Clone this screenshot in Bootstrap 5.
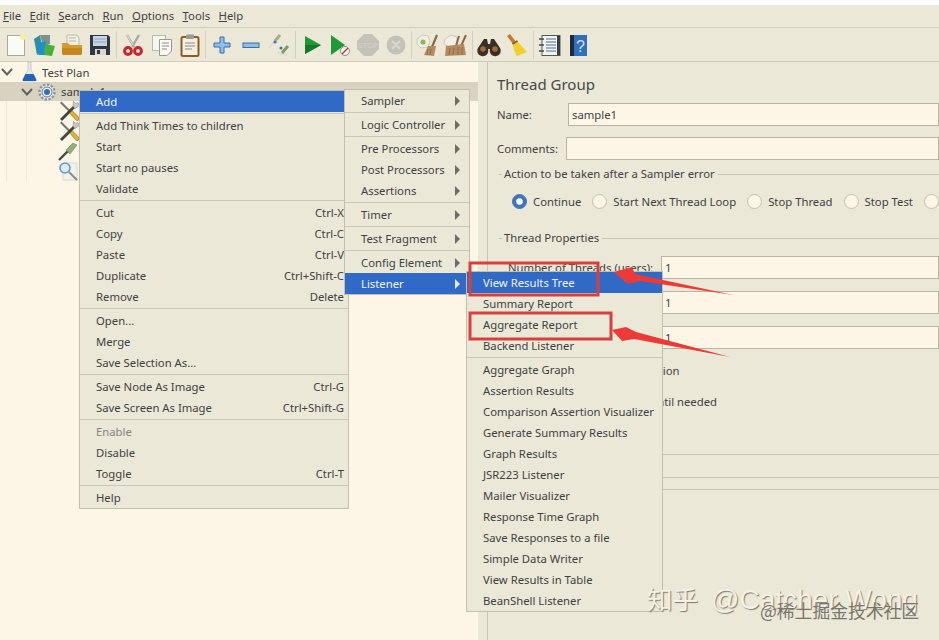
<!DOCTYPE html>
<html lang="en">
<head>
    <meta charset="UTF-8">
    <meta name="viewport" content="width=device-width, initial-scale=1.0">
    <title>Apache JMeter</title>
    <link rel="stylesheet" href="https://cdn.jsdelivr.net/npm/bootstrap@5.3.0/dist/css/bootstrap.min.css">
    <style>
        body {
            background: #fff;
            font-family: "Noto Sans", "Open Sans", sans-serif;
            font-size: 11.3px;
            line-height: 18px;
            color: #3d4242;
            height: 640px;
            overflow: hidden;
            position: relative;
        }
        .app-top { height: 5px; }
        .menu-bar {
            height: 22px;
            background: #ece8d8;
            padding-left: 3px;
            gap: 8.5px;
            align-items: center;
        }
        .tool-bar {
            height: 35px;
            background: #ece8d8;
            border-top: 1px solid #d3cfbd;
            border-bottom: 1px solid #cfcbb9;
            display: grid;
            grid-template-columns: 2px 28px 28px 28px 28px 4px 29px 29px 27px 4px 30px 27px 29px 4px 29px 27px 29px 27px 4px 27px 30px 4px 29px 28px 4px 29px 28px 4px 29px 30px;
            align-items: center;
            justify-items: center;
        }
        .tool-sep { width: 1px; height: 28px; background: #d3cfbd; }
        .split { height: 579px; }
        .tree-pane {
            width: 478px;
            background: #fdf6e6;
            flex-shrink: 0;
        }
        .tree-row { height: 20px; }
        .tree-sel { height: 19px; background: #d8d2c0; padding-left: 21px; }
        .tree-guide1 { margin-left: 6px; border-left: 1px solid #f0e9d8; }
        .tree-guide2 { margin-left: 19px; border-left: 1px solid #f0e9d8; padding-left: 31px; }
        .tree-plan { padding-left: 1px; }
        .tree-plan-label { margin-left: 4px; padding-top: 1px; }
        .strip {
            width: 10px;
            background: #ece8d8;
            border-right: 1px solid #c9c5b3;
            flex-shrink: 0;
        }
        .form-pane {
            flex-grow: 1;
            background: #ece8d8;
            padding: 11px 0 0 9px;
            overflow: hidden;
            white-space: nowrap;
        }
        .pane-title { font-size: 15px; line-height: 22px; color: #454a4a; margin-bottom: 8px; }
        .jm-input.form-control {
            height: 23px;
            min-height: 23px;
            padding: 0 3px;
            font-size: 11.3px;
            line-height: 18px;
            color: #3d4242;
            background: #fdf6e6;
            border: 1px solid #bab5a3;
            border-radius: 0;
        }
        .name-label { width: 71px; flex-shrink: 0; }
        .comment-row { margin-top: 11px; }
        .comment-label { width: 69px; flex-shrink: 0; }
        .legend-row { height: 18px; margin-top: 5px; }
        .legend-row.second { margin-top: 18px; }
        .legend-tick { width: 3px; border-top: 1px solid #c9c5b3; margin-right: 2px; margin-left: 2px; }
        .legend-line { flex-grow: 1; border-top: 1px solid #c9c5b3; margin-left: 3px; }
        .radio-row { margin: 9px 0 0 15px; height: 19px; gap: 11px; }
        .radio-item { gap: 6px; flex-shrink: 0; }
        .form-check-input.jm-radio {
            width: 15px;
            height: 15px;
            margin: 0;
            background-color: #fdf6e6;
            border-color: #c4bfad;
            flex-shrink: 0;
        }
        .form-check-input.jm-radio:checked {
            background-color: #3d76bd;
            border-color: #3d76bd;
        }
        .prop-row { margin-bottom: 12px; padding-left: 11px; }
        .prop-rows { margin: 9px 0 13px; }
        .prop-row:last-child { margin-bottom: 0; }
        .prop-label { width: 153px; flex-shrink: 0; }
        .check-row { height: 18px; padding-left: 34px; margin-bottom: 13px; }
        .rule-a { border-top: 1px solid #c9c5b3; margin-top: 43px; height: 23px; }
        .rule-b { border-top: 1px solid #c9c5b3; height: 12px; }
        .rule-c { border-top: 1px solid #c9c5b3; }
        .jm-menu {
            display: block;
            position: absolute;
            margin: 0;
            padding: 0;
            min-width: 0;
            background: #ece8d8;
            border: 1px solid #c3bfae;
            border-radius: 0;
            font-size: 11.3px;
            color: #3d4242;
        }
        .menu-main { left: 79px; top: 90px; width: 270px; }
        .menu-sub { left: 344px; top: 89px; width: 126px; }
        .menu-list { left: 466px; top: 271px; width: 197px; }
        .jm-item.dropdown-item {
            height: 21px;
            line-height: 21px;
            padding: 0 4px 0 16px;
            color: #3d4242;
            font-size: 11.3px;
            display: flex;
            justify-content: space-between;
            align-items: center;
        }
        .jm-item.jm-active { background: #316ac6; color: #f2f4f4; }
        .jm-item.jm-disabled { color: #85857b; }
        .menu-sub .jm-item.dropdown-item { padding-right: 9px; }
        .jm-sep.dropdown-divider { margin: 1px 0; border-top: 1px solid #cbc7b6; opacity: 1; height: 0; }
        .sub-caret {
            width: 0;
            height: 0;
            border-top: 5px solid transparent;
            border-bottom: 5px solid transparent;
            border-left: 5px solid #6d6d66;
        }
        .jm-active .sub-caret { border-left-color: #e6ecf6; }
        .note-layer { position: absolute; left: 0; top: 0; pointer-events: none; z-index: 1001; }
        .mark-zh {
            position: absolute;
            left: 647px;
            top: 580px;
            z-index: 1002;
            font-family: "Noto Sans CJK SC", sans-serif;
            font-size: 25.5px;
            line-height: 36px;
            color: #f5f1e6;
            text-shadow: 1px 1px 1px #7d7a6e;
            white-space: nowrap;
        }
        .mark-latin {
            font-family: "Liberation Sans", sans-serif;
            font-size: 28px;
            margin-left: 13px;
        }
        .mark-site {
            position: absolute;
            left: 760px;
            top: 598px;
            z-index: 1003;
            font-family: "Noto Sans CJK SC", sans-serif;
            font-size: 17.8px;
            line-height: 24px;
            color: #77756c;
            white-space: nowrap;
        }
    </style>
</head>
<body>

    <svg width="0" height="0" class="position-absolute">
        <symbol id="ic-tools" viewBox="0 0 22 22">
            <path d="M2 3 L3.500 1.500 L12 10 L10.500 11.500 Z" fill="#77776f"/>
            <path d="M10 11 L12.500 9 L20.500 17 Q21.500 19 20 20.500 Q18.500 21 17.500 19.500 Z" fill="#e3b32e" stroke="#7a6320" stroke-width=".6"/>
            <path d="M2 19 L4 21 L17 8 L15 6 Z" fill="#45453f"/>
            <path d="M15 6 L15.500 1.500 L18 3.500 L20 2.500 L21.500 5.500 L17 8.500 Z" fill="#c5c8c4" stroke="#7d807d" stroke-width=".5"/>
        </symbol>
    </svg>

    <div class="app-top"></div>

    <!-- Menu bar -->
    <div class="menu-bar d-flex">
        <span><u>F</u>ile</span>
        <span><u>E</u>dit</span>
        <span><u>S</u>earch</span>
        <span><u>R</u>un</span>
        <span><u>O</u>ptions</span>
        <span><u>T</u>ools</span>
        <span><u>H</u>elp</span>
    </div>

    <!-- Toolbar -->
    <div class="tool-bar">
        <span></span>
        <svg width="24" height="24" viewBox="0 0 24 24"><rect x="3.500" y="2.500" width="17" height="20" fill="#fbfbf6" stroke="#a9a89c"/><circle cx="19" cy="4" r="3" fill="#f5f0a0"/></svg>
        <svg width="24" height="24" viewBox="0 0 24 24"><path d="M2 6 L8 2 L11 20 L5 22 Z" fill="#2f8f9c"/><path d="M8 2 H18 V11 L11 13 Z" fill="#7d9488"/><path d="M6 10 L14 8 L16 22 L7 22 Z" fill="#1f8fd0"/><path d="M13 11 L23 13 L20 23 L12 22 Z" fill="#4bb03a"/></svg>
        <svg width="24" height="24" viewBox="0 0 24 24"><path d="M7 2 H17 L19 5 V14 H7 Z" fill="#f2efe4" stroke="#a9a392" stroke-width=".7"/><path d="M9 5 H16 M9 8 H16" stroke="#b9b5a6"/><path d="M2 10 H8 L10 12 H22 V20 Q22 22 20 22 H4 Q2 22 2 20 Z" fill="#d89a2b"/><path d="M2 15 H22 V20 Q22 22 20 22 H4 Q2 22 2 20 Z" fill="#c5861d"/></svg>
        <svg width="24" height="24" viewBox="0 0 24 24"><path d="M2 2 H20 L22 4 V22 H2 Z" fill="#2f3644"/><rect x="5" y="3" width="14" height="10" fill="#c9d4e3"/><path d="M6 6 H18 M6 9 H18" stroke="#8fa2bd"/><rect x="7" y="16" width="11" height="6" fill="#d8d8d0"/><rect x="9" y="17" width="3" height="4" fill="#2f3644"/></svg>
        <span class="tool-sep"></span>
        <svg width="24" height="24" viewBox="0 0 24 24"><path d="M6 2 L13 14 M18 2 L11 14" stroke="#a9a99f" stroke-width="2.400"/><path d="M6 2 L12 12" stroke="#e4e2d8"/><circle cx="7" cy="18" r="3.400" fill="none" stroke="#c5282a" stroke-width="3"/><circle cx="17" cy="18" r="3.400" fill="none" stroke="#c5282a" stroke-width="3"/></svg>
        <svg width="24" height="24" viewBox="0 0 24 24"><rect x="2.500" y="2.500" width="13" height="15" fill="#f6f5ef" stroke="#b9b8ac"/><path d="M9.500 6.500 H21.500 V18 L17 22.500 H9.500 Z" fill="#fbfaf5" stroke="#9a998d"/><path d="M12 10 H19 M12 13 H19 M12 16 H17" stroke="#8e8d82"/></svg>
        <svg width="24" height="24" viewBox="0 0 24 24"><rect x="3.500" y="4" width="17" height="19" rx="1.500" fill="#f3eedf" stroke="#8d5c24" stroke-width="2"/><rect x="8" y="1.500" width="8" height="4.500" rx="1" fill="#9a9a90"/><path d="M7 10 H17 M7 13 H17 M7 16 H14" stroke="#8f8e82"/></svg>
        <span class="tool-sep"></span>
        <svg width="24" height="24" viewBox="0 0 24 24"><path d="M10 4 H14 V10 H20 V14 H14 V20 H10 V14 H4 V10 H10 Z" fill="#8fc0e8" stroke="#3a6ea5"/></svg>
        <svg width="24" height="24" viewBox="0 0 24 24"><rect x="4" y="10" width="16" height="4.500" fill="#8fc0e8" stroke="#3a6ea5"/></svg>
        <svg width="24" height="24" viewBox="0 0 24 24"><path d="M2 15 L8 8 M10 20 L20 22" stroke="#dcdbd2" stroke-width="1.400" fill="none"/><path d="M8 8 L13 2" stroke="#a3b27d" stroke-width="3"/><circle cx="8" cy="9" r="1.600" fill="#3f78b8"/><path d="M15 20 L21 13" stroke="#7da05c" stroke-width="3"/><circle cx="14" cy="15" r="1.600" fill="#3f78b8"/></svg>
        <span class="tool-sep"></span>
        <svg width="24" height="24" viewBox="0 0 24 24"><path d="M5 3 L21 12 L5 21 Z" fill="#1f9a35"/><path d="M5 12 H21 L5 21 Z" fill="#127a26"/></svg>
        <svg width="24" height="24" viewBox="0 0 24 24"><path d="M3 2 L17 12 L3 22 Z" fill="#1f9a35"/><circle cx="17" cy="18" r="4.500" fill="#f7f4ea" stroke="#8d8d97"/><path d="M14 21 L20 15" stroke="#c5383a" stroke-width="1.400"/></svg>
        <svg width="24" height="24" viewBox="0 0 24 24"><path d="M8 1 H16 L23 8 V16 L16 23 H8 L1 16 V8 Z" fill="#c3c1b8"/><text x="12" y="15" text-anchor="middle" font-family="Liberation Sans, sans-serif" font-size="8" fill="#d4d2c9">STOP</text></svg>
        <svg width="24" height="24" viewBox="0 0 24 24"><circle cx="12" cy="12" r="9.500" fill="#c3c1b8"/><path d="M8 8 L16 16 M16 8 L8 16" stroke="#d8d6cc" stroke-width="2.400"/></svg>
        <span class="tool-sep"></span>
        <svg width="24" height="24" viewBox="0 0 24 24"><path d="M2 6 L7 2 L13 3 L15 8 L13 14 L6 15 L2 11 Z" fill="#f1efe6" stroke="#bdbcae" stroke-width=".7"/><circle cx="8" cy="9" r="2.600" fill="#8cbb58"/><path d="M22 2 L17 14" stroke="#8a6a3f" stroke-width="2.200"/><path d="M13 13 L21 13 L19 23 L9 22 Z" fill="#b58a63"/><path d="M13 16 L12 22 M16 16 L15 22" stroke="#8d6a48"/></svg>
        <svg width="24" height="24" viewBox="0 0 24 24"><path d="M2 6 L8 2 L14 4 L14 12 L6 14 L1 11 Z" fill="#f1efe6" stroke="#bdbcae" stroke-width=".7"/><path d="M16 3 L13 13 M23 2 L18 13" stroke="#8a6a3f" stroke-width="2"/><path d="M3 13 L21 11 L23 22 L2 23 Z" fill="#b58a63"/><path d="M7 15 L6 22 M11 15 L10 22 M15 14 L15 22 M19 14 L19 22" stroke="#8d6a48"/></svg>
        <span class="tool-sep"></span>
        <svg width="24" height="24" viewBox="0 0 24 24"><path d="M7 6 L10 6 L11 11 H13 L14 6 L17 6 L23 15 A5.500 5.500 0 1 1 13 16 H11 A5.500 5.500 0 1 1 1 15 Z" fill="#3a2f26"/><circle cx="6" cy="16" r="2.800" fill="#a56b32"/><circle cx="18" cy="16" r="2.800" fill="#a56b32"/></svg>
        <svg width="24" height="24" viewBox="0 0 24 24"><path d="M2 3 L5 1 L11 9 L8 11 Z" fill="#c7782a"/><path d="M8 10 L12 8 L22 19 L12 23 Q8 17 8 10 Z" fill="#f2cf2c"/><path d="M7.500 11 L12.500 8" stroke="#8d5c24" stroke-width="2"/></svg>
        <span class="tool-sep"></span>
        <svg width="24" height="24" viewBox="0 0 24 24"><rect x="4" y="2.500" width="18" height="20" fill="#f4f5f0" stroke="#55585a"/><rect x="19" y="3" width="3" height="19" fill="#3a3f46"/><path d="M1 6 H6 M1 12 H6 M1 18 H6" stroke="#44484a" stroke-width="1.600"/><path d="M8 6 H18 M8 9 H18 M8 12 H18 M8 15 H18 M8 18 H18" stroke="#4c6f95"/></svg>
        <svg width="24" height="24" viewBox="0 0 24 24"><rect x="4" y="2" width="17" height="21" fill="#2f6fbe"/><rect x="4" y="2" width="4" height="21" fill="#1c2a3c"/><text x="10" y="19" font-family="Liberation Sans, sans-serif" font-size="16" fill="#cfe0f5">?</text></svg>
    </div>

    <div class="split d-flex">
        <!-- Test plan tree -->
        <div class="tree-pane">
            <div class="tree-row tree-plan d-flex align-items-center">
                <svg width="12" height="10" viewBox="0 0 12 10"><path d="M1 2 L6 7.500 L11 2" fill="none" stroke="#5f6262" stroke-width="2"/></svg>
                <svg class="ms-2" width="17" height="20" viewBox="0 0 17 20"><path d="M7 0 H10 V8 L15 17 Q16 19 14 19 H3 Q1 19 2 17 L7 8 Z" fill="#e6e8ec" stroke="#b5b7bd" stroke-width=".6"/><path d="M4.500 12 H12.500 L15 17 Q16 19 14 19 H3 Q1 19 2 17 Z" fill="#2462b8"/></svg>
                <span class="tree-plan-label">Test Plan</span>
            </div>
            <div class="tree-sel d-flex align-items-center">
                <svg width="12" height="10" viewBox="0 0 12 10"><path d="M1 2 L6 7.500 L11 2" fill="none" stroke="#5f6262" stroke-width="2"/></svg>
                <svg class="ms-1" width="20" height="20" viewBox="0 0 20 20"><circle cx="10" cy="10" r="7.500" fill="#e9eaec" stroke="#8f939b" stroke-width="2.400" stroke-dasharray="2.400 1.500"/><circle cx="10" cy="10" r="5" fill="#eef1f6" stroke="#6f7682"/><circle cx="10" cy="10" r="3" fill="#2f6fbe"/></svg>
                <span class="tree-plan-label">sample1</span>
            </div>
            <div class="tree-guide1">
                <div class="tree-guide2">
                    <div class="tree-row d-flex align-items-center"><svg width="22" height="22"><use href="#ic-tools"/></svg></div>
                    <div class="tree-row d-flex align-items-center"><svg width="22" height="22"><use href="#ic-tools"/></svg></div>
                    <div class="tree-row d-flex align-items-center">
                        <svg width="20" height="20" viewBox="0 0 20 20"><path d="M1 19 L10 10" stroke="#45494a" stroke-width="2.400"/><path d="M8 9 L15 2 L19 4 L12 13 Z" fill="#8fb072" stroke="#5f7f4a" stroke-width=".5"/></svg>
                    </div>
                    <div class="tree-row d-flex align-items-center">
                        <svg width="20" height="20" viewBox="0 0 20 20"><rect x="5" y="2" width="14" height="17" fill="#f2f1ec" stroke="#dbdad2"/><circle cx="7" cy="7" r="5" fill="#dcecf8" stroke="#5f9ad0" stroke-width="1.600"/><path d="M11 11 L19 19" stroke="#8d8d85" stroke-width="2"/></svg>
                    </div>
                </div>
            </div>
        </div>
        <div class="strip"></div>

        <!-- Thread group form -->
        <div class="form-pane">
            <div class="pane-title">Thread Group</div>
            <div class="d-flex align-items-center">
                <span class="name-label">Name:</span>
                <input class="form-control jm-input" value="sample1">
            </div>
            <div class="comment-row d-flex align-items-center">
                <span class="comment-label">Comments:</span>
                <input class="form-control jm-input">
            </div>
            <div class="legend-row d-flex align-items-center">
                <span class="legend-tick"></span>
                <span>Action to be taken after a Sampler error</span>
                <span class="legend-line"></span>
            </div>
            <div class="radio-row d-flex align-items-center">
                <label class="radio-item d-flex align-items-center"><input class="form-check-input jm-radio" type="radio" name="onerror" checked>Continue</label>
                <label class="radio-item d-flex align-items-center"><input class="form-check-input jm-radio" type="radio" name="onerror">Start Next Thread Loop</label>
                <label class="radio-item d-flex align-items-center"><input class="form-check-input jm-radio" type="radio" name="onerror">Stop Thread</label>
                <label class="radio-item d-flex align-items-center"><input class="form-check-input jm-radio" type="radio" name="onerror">Stop Test</label>
                <label class="radio-item d-flex align-items-center"><input class="form-check-input jm-radio" type="radio" name="onerror"></label>
            </div>
            <div class="legend-row second d-flex align-items-center">
                <span class="legend-tick"></span>
                <span>Thread Properties</span>
                <span class="legend-line"></span>
            </div>
            <div class="prop-rows">
                <div class="prop-row d-flex align-items-center">
                    <span class="prop-label">Number of Threads (users):</span>
                    <input class="form-control jm-input" value="1">
                </div>
                <div class="prop-row d-flex align-items-center">
                    <span class="prop-label">Ramp-up period (seconds):</span>
                    <input class="form-control jm-input" value="1">
                </div>
                <div class="prop-row d-flex align-items-center">
                    <span class="prop-label">Loop Count:</span>
                    <input class="form-control jm-input" value="1">
                </div>
            </div>
            <div class="check-row">Same user on each iteration</div>
            <div class="check-row">Delay Thread creation until needed</div>
            <div class="rule-a"></div>
            <div class="rule-b"></div>
            <div class="rule-c"></div>
        </div>
    </div>

    <!-- Context menu -->
    <div class="dropdown-menu jm-menu menu-main">
        <a class="dropdown-item jm-item jm-active">Add</a>
        <hr class="dropdown-divider jm-sep">
        <a class="dropdown-item jm-item">Add Think Times to children</a>
        <a class="dropdown-item jm-item">Start</a>
        <a class="dropdown-item jm-item">Start no pauses</a>
        <a class="dropdown-item jm-item">Validate</a>
        <hr class="dropdown-divider jm-sep">
        <a class="dropdown-item jm-item">Cut<span>Ctrl-X</span></a>
        <a class="dropdown-item jm-item">Copy<span>Ctrl-C</span></a>
        <a class="dropdown-item jm-item">Paste<span>Ctrl-V</span></a>
        <a class="dropdown-item jm-item">Duplicate<span>Ctrl+Shift-C</span></a>
        <a class="dropdown-item jm-item">Remove<span>Delete</span></a>
        <hr class="dropdown-divider jm-sep">
        <a class="dropdown-item jm-item">Open...</a>
        <a class="dropdown-item jm-item">Merge</a>
        <a class="dropdown-item jm-item">Save Selection As...</a>
        <hr class="dropdown-divider jm-sep">
        <a class="dropdown-item jm-item">Save Node As Image<span>Ctrl-G</span></a>
        <a class="dropdown-item jm-item">Save Screen As Image<span>Ctrl+Shift-G</span></a>
        <hr class="dropdown-divider jm-sep">
        <a class="dropdown-item jm-item jm-disabled">Enable</a>
        <a class="dropdown-item jm-item">Disable</a>
        <a class="dropdown-item jm-item">Toggle<span>Ctrl-T</span></a>
        <hr class="dropdown-divider jm-sep">
        <a class="dropdown-item jm-item">Help</a>
    </div>

    <div class="dropdown-menu jm-menu menu-sub">
        <a class="dropdown-item jm-item">Sampler<span class="sub-caret"></span></a>
        <hr class="dropdown-divider jm-sep">
        <a class="dropdown-item jm-item">Logic Controller<span class="sub-caret"></span></a>
        <hr class="dropdown-divider jm-sep">
        <a class="dropdown-item jm-item">Pre Processors<span class="sub-caret"></span></a>
        <a class="dropdown-item jm-item">Post Processors<span class="sub-caret"></span></a>
        <a class="dropdown-item jm-item">Assertions<span class="sub-caret"></span></a>
        <hr class="dropdown-divider jm-sep">
        <a class="dropdown-item jm-item">Timer<span class="sub-caret"></span></a>
        <hr class="dropdown-divider jm-sep">
        <a class="dropdown-item jm-item">Test Fragment<span class="sub-caret"></span></a>
        <hr class="dropdown-divider jm-sep">
        <a class="dropdown-item jm-item">Config Element<span class="sub-caret"></span></a>
        <a class="dropdown-item jm-item jm-active">Listener<span class="sub-caret"></span></a>
    </div>

    <div class="dropdown-menu jm-menu menu-list">
        <a class="dropdown-item jm-item jm-active">View Results Tree</a>
        <a class="dropdown-item jm-item">Summary Report</a>
        <a class="dropdown-item jm-item">Aggregate Report</a>
        <a class="dropdown-item jm-item">Backend Listener</a>
        <hr class="dropdown-divider jm-sep">
        <a class="dropdown-item jm-item">Aggregate Graph</a>
        <a class="dropdown-item jm-item">Assertion Results</a>
        <a class="dropdown-item jm-item">Comparison Assertion Visualizer</a>
        <a class="dropdown-item jm-item">Generate Summary Results</a>
        <a class="dropdown-item jm-item">Graph Results</a>
        <a class="dropdown-item jm-item">JSR223 Listener</a>
        <a class="dropdown-item jm-item">Mailer Visualizer</a>
        <a class="dropdown-item jm-item">Response Time Graph</a>
        <a class="dropdown-item jm-item">Save Responses to a file</a>
        <a class="dropdown-item jm-item">Simple Data Writer</a>
        <a class="dropdown-item jm-item">View Results in Table</a>
        <a class="dropdown-item jm-item">BeanShell Listener</a>
    </div>

    <!-- Red annotations drawn over the screenshot -->
    <svg class="note-layer" width="939" height="640" viewBox="0 0 939 640">
        <rect x="470" y="263" width="128" height="32" fill="none" stroke="#d8403f" stroke-width="3"/>
        <rect x="470" y="313" width="141" height="26" fill="none" stroke="#d8403f" stroke-width="3"/>
        <polygon points="614,272 632,267 635,274 733,295 640,281 628,284" fill="#ee3a36"/>
        <polygon points="612,330 626,327 636,332 730,357 634,339 622,341" fill="#ee3a36"/>
    </svg>

    <div class="mark-zh">知乎<span class="mark-latin">@Catcher Wong</span></div>
    <div class="mark-site">@稀土掘金技术社区</div>

    <script src="https://cdn.jsdelivr.net/npm/bootstrap@5.3.0/dist/js/bootstrap.bundle.min.js"></script>
</body>
</html>
